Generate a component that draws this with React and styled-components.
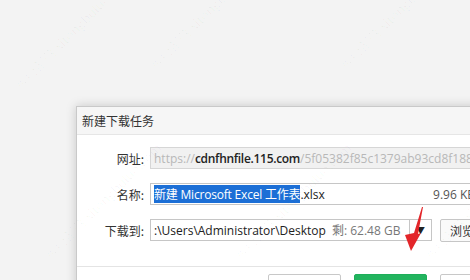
import React from 'react'
import styled, { createGlobalStyle } from 'styled-components'

const Global = createGlobalStyle`
  html, body {
    margin: 0;
    padding: 0;
    background: #f3f3f3;
    overflow: hidden;
  }
  body {
    font-family: "Noto Sans CJK SC", "Noto Sans", sans-serif;
  }
`

const Page = styled.div`
  position: relative;
  width: 470px;
  height: 280px;
  overflow: hidden;
  padding: 106px 0 0 76px;
  box-sizing: border-box;
`

const Dialog = styled.div`
  width: 440px;
  background: #fff;
  border: 1px solid #c9c9c9;
  box-shadow: 0 0 10px rgba(0, 0, 0, 0.18);
`

const TitleBar = styled.div`
  height: 27px;
  display: flex;
  align-items: center;
  padding-left: 5px;
  background: #f6f6f6;
  border-bottom: 1px solid #e6e6e6;
  font-size: 12px;
  color: #333;
`

const Body = styled.div`
  display: flex;
  flex-direction: column;
  gap: 14px;
  padding: 12px 0 25px;
  border-bottom: 1px solid #e4e4e4;
`

const Row = styled.div`
  display: flex;
  align-items: center;
  height: 22px;
`

const Label = styled.div`
  width: 67px;
  flex: none;
  text-align: right;
  padding-right: 6px;
  font-size: 12px;
  color: #333;
`

const Field = styled.div`
  flex: ${({ $width }) => ($width ? 'none' : '1')};
  width: ${({ $width }) => ($width ? `${$width}px` : 'auto')};
  height: 22px;
  box-sizing: border-box;
  display: flex;
  align-items: center;
  padding: 0 3px;
  border: 1px solid ${({ $disabled }) => ($disabled ? '#d6d6d6' : '#c6c6c6')};
  background: ${({ $disabled }) => ($disabled ? '#f1f1f1' : '#fff')};
  font-family: "Open Sans", "Noto Sans CJK SC", sans-serif;
  font-size: 12px;
  color: #222;
  white-space: nowrap;
  overflow: hidden;
`

const Faint = styled.span`
  color: #b8b8b8;
`

const Strong = styled.span`
  color: #222;
  font-weight: 600;
  letter-spacing: -0.3px;
`

const Selected = styled.span`
  background: #1c6fd6;
  color: #fff;
  letter-spacing: -0.2px;
`

const Size = styled.span`
  margin-left: auto;
  padding-right: 38px;
  color: #555;
`

const Muted = styled.span`
  color: #777;
  margin-left: 6px;
`

const Dropdown = styled.div`
  width: 22px;
  height: 22px;
  box-sizing: border-box;
  border: 1px solid #c6c6c6;
  border-left: none;
  display: flex;
  align-items: center;
  justify-content: center;
  font-size: 9px;
  color: #222;
`

const Browse = styled.button`
  margin-left: 8px;
  width: 60px;
  height: 23px;
  border: 1px solid #c6c6c6;
  background: #fafafa;
  border-radius: 2px;
  font-family: inherit;
  font-size: 12px;
  color: #333;
  text-align: left;
  padding-left: 9px;
`

const Footer = styled.div`
  display: flex;
  gap: 13px;
  padding: 7px 0 0 191px;
  height: 30px;
`

const FootButton = styled.button`
  width: 73px;
  height: 26px;
  flex: none;
  border-radius: 2px;
  border: 1px solid ${({ $primary }) => ($primary ? '#1fae5a' : '#c8c8c8')};
  background: ${({ $primary }) => ($primary ? '#22b45e' : '#fff')};
`

const Arrow = styled.svg`
  position: absolute;
  left: 400px;
  top: 200px;
`

const Mark = styled.div`
  position: absolute;
  left: ${({ $x }) => $x}px;
  top: ${({ $y }) => $y}px;
  transform: rotate(-45deg);
  transform-origin: left top;
  font-size: 13px;
  color: rgba(0, 0, 0, 0.03);
  white-space: nowrap;
  pointer-events: none;
`

const marks = [
  { x: 10, y: 80 }, { x: 145, y: 60 }, { x: 335, y: 60 },
  { x: 40, y: 250 }, { x: 230, y: 250 }, { x: 420, y: 250 },
]

export default function App() {
  return (
    <Page>
      <Global />
      <Dialog>
        <TitleBar>新建下载任务</TitleBar>
        <Body>
          <Row>
            <Label>网址:</Label>
            <Field $disabled>
              <Faint>https://</Faint>
              <Strong>cdnfhnfile.115.com</Strong>
              <Faint>/5f05382f85c1379ab93cd8f1887</Faint>
            </Field>
          </Row>
          <Row>
            <Label>名称:</Label>
            <Field>
              <Selected>新建 Microsoft Excel 工作表</Selected>.xlsx
              <Size>9.96 KB</Size>
            </Field>
          </Row>
          <Row>
            <Label>下载到:</Label>
            <Field $width={260}>
              :\Users\Administrator\Desktop
              <Muted>剩: 62.48 GB</Muted>
            </Field>
            <Dropdown>▼</Dropdown>
            <Browse>浏览</Browse>
          </Row>
        </Body>
        <Footer>
          <FootButton />
          <FootButton $primary />
          <FootButton />
        </Footer>
      </Dialog>
      <Arrow width="30" height="56" viewBox="0 0 30 56">
        <polygon points="23,7 18,34 21,33 11,51 5,35 14,33 22,7" fill="#e3262a" />
      </Arrow>
      {marks.map((m, i) => (
        <Mark key={i} $x={m.x} $y={m.y}>系统部落 xitongbuluo.com</Mark>
      ))}
    </Page>
  )
}
